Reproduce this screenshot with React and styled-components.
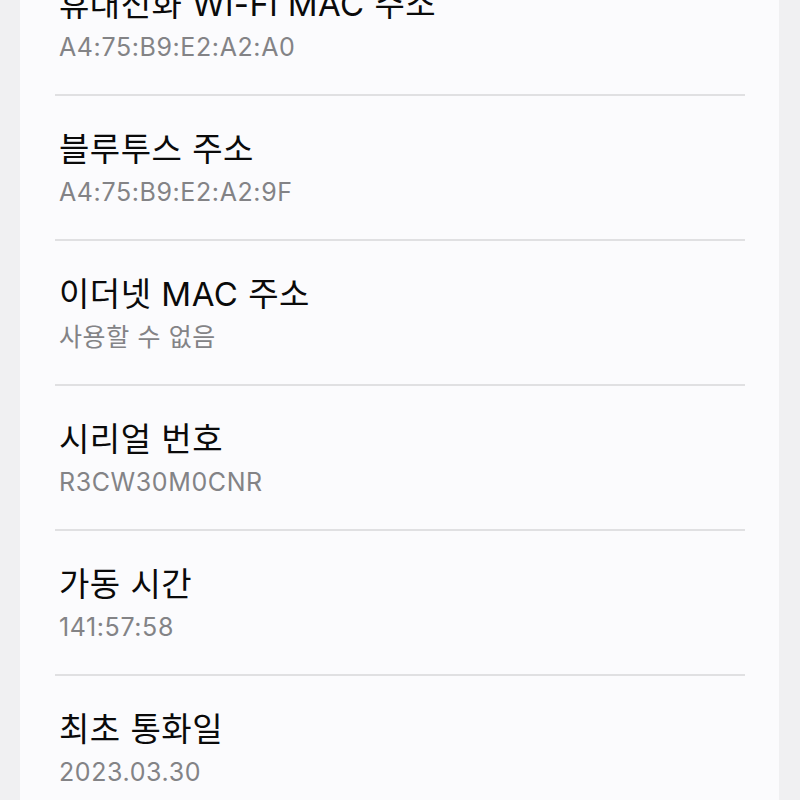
import styled, { createGlobalStyle } from 'styled-components';

const GlobalStyle = createGlobalStyle`
  html, body {
    margin: 0;
    padding: 0;
    background: #f0f0f2;
    overflow: hidden;
  }
  body {
    font-family: "Inter", "Noto Sans CJK KR", sans-serif;
  }
`;

const items = [
  { title: '휴대전화 Wi-Fi MAC 주소', value: 'A4:75:B9:E2:A2:A0' },
  { title: '블루투스 주소', value: 'A4:75:B9:E2:A2:9F' },
  { title: '이더넷 MAC 주소', value: '사용할 수 없음' },
  { title: '시리얼 번호', value: 'R3CW30M0CNR' },
  { title: '가동 시간', value: '141:57:58' },
  { title: '최초 통화일', value: '2023.03.30' },
];

const App = () => {
  return (
    <Page>
      <GlobalStyle />
      <Card>
        {items.map((item, i) => (
          <Row key={i} $last={i === items.length - 1}>
            <Title>{item.title}</Title>
            <Value>{item.value}</Value>
          </Row>
        ))}
      </Card>
    </Page>
  );
};

const Page = styled.div`
  width: 800px;
  height: 800px;
  overflow: hidden;
  background: #f0f0f2;
`;

const Card = styled.div`
  margin: -49px 21px 0 20px;
  background: #fbfbfd;
  padding-bottom: 40px;
`;

const Row = styled.div`
  display: flex;
  flex-direction: column;
  padding: 33px 0 32px 4px;
  margin: 0 34px 0 35px;
  border-bottom: 2px solid ${(p) => (p.$last ? 'transparent' : '#e0e0e2')};
`;

const Title = styled.div`
  font-size: 33px;
  line-height: 40px;
  color: #0a0a0a;
  letter-spacing: 0.5px;
  white-space: nowrap;
`;

const Value = styled.div`
  margin-top: 8px;
  font-size: 25px;
  line-height: 30px;
  color: #838386;
  letter-spacing: 0.6px;
`;

export default App;
